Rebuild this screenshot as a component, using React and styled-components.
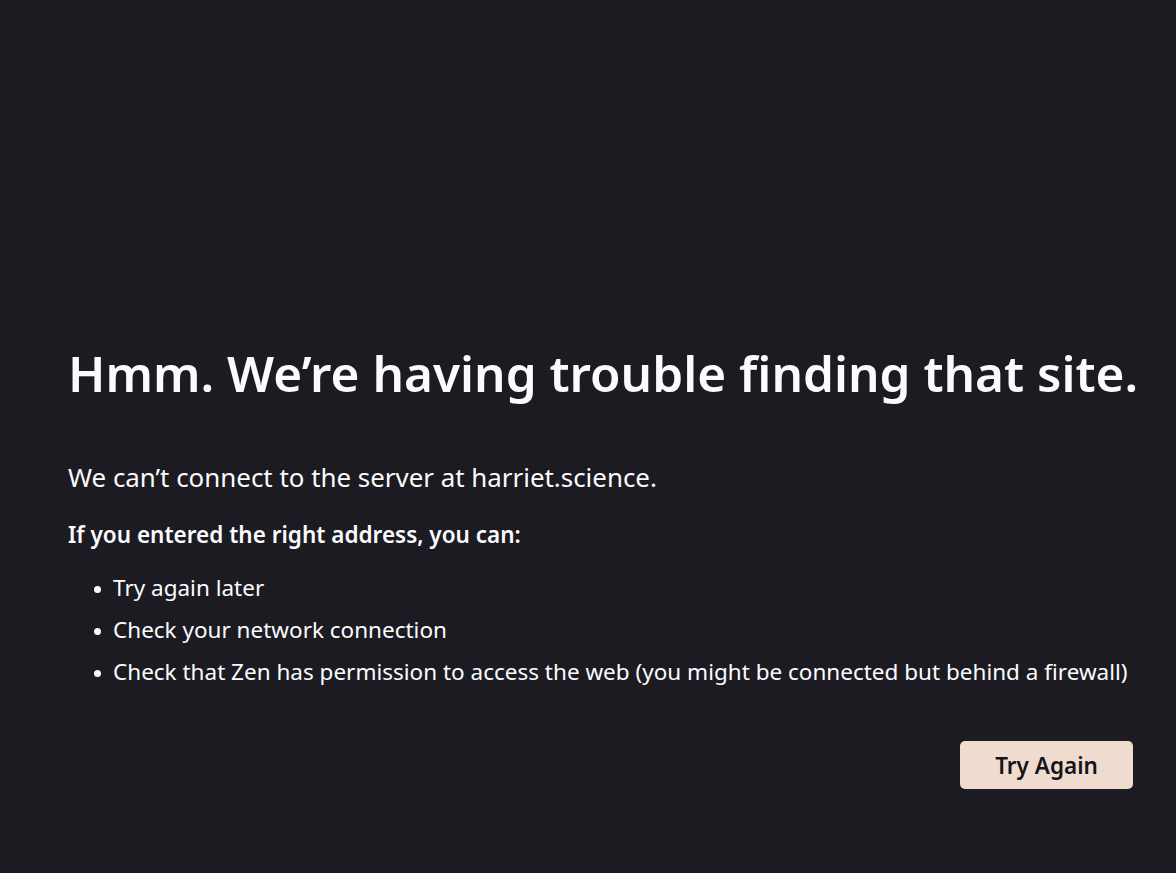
import React from "react"
import styled, { createGlobalStyle } from "styled-components"

const GlobalStyle = createGlobalStyle`
    html, body {
        margin: 0;
        padding: 0;
        background-color: #1c1b22;
    }
    body {
        font-family: "Noto Sans", "Open Sans", sans-serif;
        font-size: 22.5px;
        color: #fbfbfe;
    }
`

const items = [
    "Try again later",
    "Check your network connection",
    "Check that Zen has permission to access the web (you might be connected but behind a firewall)",
]

const App = () => {
    return (
        <>
            <GlobalStyle />
            <Page>
                <Container>
                    <Title>Hmm. We’re having trouble finding that site.</Title>
                    <Description>We can’t connect to the server at harriet.science.</Description>
                    <Lead>If you entered the right address, you can:</Lead>
                    <List>
                        {items.map((item) => (
                            <Item key={item}>{item}</Item>
                        ))}
                    </List>
                    <ButtonRow>
                        <TryAgainButton>Try Again</TryAgainButton>
                    </ButtonRow>
                </Container>
            </Page>
        </>
    )
}

const Page = styled.div`
    min-height: 873px;
    box-sizing: border-box;
    padding: 343px 43px 0 68px;
`

const Container = styled.div`
    display: flex;
    flex-direction: column;
    margin-right: -20px;
`

const Title = styled.h1`
    margin: 0;
    font-size: 49.5px;
    font-weight: 600;
    line-height: 60px;
    white-space: nowrap;
`

const Description = styled.p`
    margin: 56px 0 0;
    font-size: 25.9px;
    line-height: 36px;
`

const Lead = styled.p`
    margin: 24px 0 0;
    font-size: 22.5px;
    font-weight: 600;
    line-height: 32px;
`

const List = styled.ul`
    margin: 21px 0 0;
    padding-left: 26px;
    list-style: none;
    display: flex;
    flex-direction: column;
    gap: 10px;
`

const Item = styled.li`
    display: flex;
    align-items: center;
    font-size: 22.5px;
    line-height: 32px;

    &::before {
        content: "";
        flex: none;
        width: 7px;
        height: 7px;
        margin: 2px 12px 0 0;
        border-radius: 50%;
        background-color: #fbfbfe;
    }
`

const ButtonRow = styled.div`
    display: flex;
    justify-content: flex-end;
    margin-top: 53px;
    margin-right: 20px;
`

const TryAgainButton = styled.button`
    width: 173px;
    height: 48px;
    border: none;
    border-radius: 5px;
    background-color: #f0dccf;
    color: #15141a;
    font-family: "Noto Sans", "Open Sans", sans-serif;
    font-size: 22.5px;
    font-weight: 600;
    cursor: pointer;
`

export default App
